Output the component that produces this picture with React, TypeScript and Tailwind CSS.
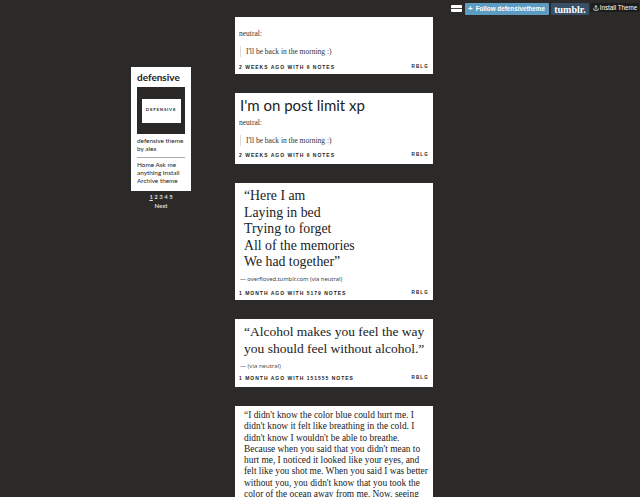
import { Upload } from "lucide-react";

const serif = "font-['Liberation_Serif',serif]";

const LONG_QUOTE = [
	"“I didn't know the color blue could hurt me. I",
	"didn't know it felt like breathing in the cold. I",
	"didn't know I wouldn't be able to breathe.",
	"Because when you said that you didn't mean to",
	"hurt me, I noticed it looked like your eyes, and",
	"felt like you shot me. When you said I was better",
	"without you, you didn't know that you took the",
	"color of the ocean away from me. Now, seeing",
];

function PostFooter({ meta }: { meta: string }) {
	return (
		<div className="flex items-center justify-between pl-[4px] pr-[4px] text-[5px] leading-[6px] font-bold tracking-[1px] text-[#222] font-['Liberation_Sans',sans-serif]">
			<span>{meta}</span>
			<span className="text-[4.5px] tracking-[1.2px]">RBLG</span>
		</div>
	);
}

function NeutralReply() {
	return (
		<div className={`pl-[4px] text-[7.5px] leading-[9px] text-[#333] ${serif}`}>
			<p>neutral:</p>
			<p className="mt-[8px] ml-px border-l border-[#ddd] pl-[5px] py-px">I'll be back in the morning :)</p>
		</div>
	);
}

function Sidebar() {
	return (
		<aside className="w-[60px] shrink-0">
			<div className="bg-white px-[6px] pt-[4px] h-[124px] text-[#222] font-['Lato',sans-serif]">
				<h1 className="text-[10px] leading-[12px] font-bold">defensive</h1>
				<div className="mt-[4px] h-[47px] bg-[#2b2928] flex items-center justify-center">
					<div className="w-[39px] h-[24px] bg-white flex items-center justify-center text-[4.5px] font-bold tracking-[0.7px] text-[#333]">
						DEFENSIVE
					</div>
				</div>
				<p className="mt-[3px] text-[6.4px] leading-[8px] whitespace-nowrap">
					defensive theme
					<br />
					by alex
				</p>
				<div className="mt-[4px] border-t border-[#aaa] pt-[3px] text-[6.4px] leading-[8px] whitespace-nowrap">
					Home Ask me
					<br />
					anything Install
					<br />
					Archive theme
				</div>
			</div>
			<div className="mt-[1px] text-center text-[6px] leading-[9px] font-bold text-[#ddd] font-['Lato',sans-serif]">
				<p>
					<span className="underline">1</span> 2 3 4 5
				</p>
				<p>Next</p>
			</div>
		</aside>
	);
}

function TopBar() {
	return (
		<div className="absolute top-[3px] right-[1px] flex items-start font-['Liberation_Sans',sans-serif]">
			<div className="mt-[2px] w-[11px] h-[7px] bg-white rounded-[1px] flex items-center">
				<div className="w-full h-px bg-[#444]" />
			</div>
			<div className="ml-[3px] h-[12px] w-[84px] bg-[#5c9cc2] rounded-[1px] flex items-center pl-[3px] text-[6.3px] font-bold text-white">
				<span className="mr-[3px] text-[8px] leading-none">+</span>Follow defensivetheme
			</div>
			<div className="ml-[2px] h-[12px] w-[38px] bg-[#3a4f68] rounded-[1px] flex items-center justify-center text-[10px] font-bold text-white font-['Liberation_Serif',serif]">
				tumblr.
			</div>
			<div className="ml-[2px] h-[9px] w-[48px] bg-[#1c1c1c] flex items-center justify-center text-[6.3px] text-white">
				<Upload className="w-[6px] h-[6px] mr-px" strokeWidth={3} />
				Install Theme
			</div>
		</div>
	);
}

export default function App() {
	return (
		<div className="relative h-[497px] overflow-hidden bg-[#2c2a29] antialiased">
			<TopBar />
			<div className="flex items-start pl-[131px]">
				<div className="pt-[67px]">
					<Sidebar />
				</div>
				<main className="ml-[44px] w-[198px] shrink-0 pt-[17px] flex flex-col gap-[19px]">
					<article className="bg-white h-[57px] pt-[12px]">
						<NeutralReply />
						<div className="mt-[7px]">
							<PostFooter meta="2 WEEKS AGO WITH 6 NOTES" />
						</div>
					</article>
					<article className="bg-white h-[71px] pt-[1px]">
						<h2 className="pl-[5px] text-[15px] leading-[22px] text-[#222] font-['Lato',sans-serif]">
							I'm on post limit xp
						</h2>
						<div className="mt-[2px]">
							<NeutralReply />
						</div>
						<div className="mt-[6px]">
							<PostFooter meta="2 WEEKS AGO WITH 6 NOTES" />
						</div>
					</article>
					<article className="bg-white h-[117px] pt-[5px]">
						<p className={`pl-[9px] text-[13.8px] leading-[16.5px] text-[#222] ${serif}`}>
							“Here I am
							<br />
							Laying in bed
							<br />
							Trying to forget
							<br />
							All of the memories
							<br />
							We had together”
						</p>
						<p className="mt-[4px] pl-[5px] text-[5.8px] leading-[9px] text-[#444] font-['Noto_Sans',sans-serif]">
							— overfloved.tumblr.com (via neutral)
						</p>
						<div className="mt-[6px]">
							<PostFooter meta="1 MONTH AGO WITH 5179 NOTES" />
						</div>
					</article>
					<article className="bg-white h-[68px] pt-[5px]">
						<p className={`pl-[9px] text-[13.5px] leading-[16.5px] text-[#222] ${serif}`}>
							“Alcohol makes you feel the way you should feel without alcohol.”
						</p>
						<p className="mt-[5px] pl-[5px] text-[6px] leading-[9px] text-[#555] font-['Noto_Sans',sans-serif]">
							— (via neutral)
						</p>
						<div className="mt-[4px]">
							<PostFooter meta="1 MONTH AGO WITH 151555 NOTES" />
						</div>
					</article>
					<article className="bg-white pt-[4px] h-[91px] overflow-hidden">
						<div className={`pl-[9px] text-[9.4px] leading-[11.3px] text-[#222] whitespace-nowrap ${serif}`}>
							{LONG_QUOTE.map((line) => (
								<p key={line}>{line}</p>
							))}
						</div>
					</article>
				</main>
			</div>
		</div>
	);
}
